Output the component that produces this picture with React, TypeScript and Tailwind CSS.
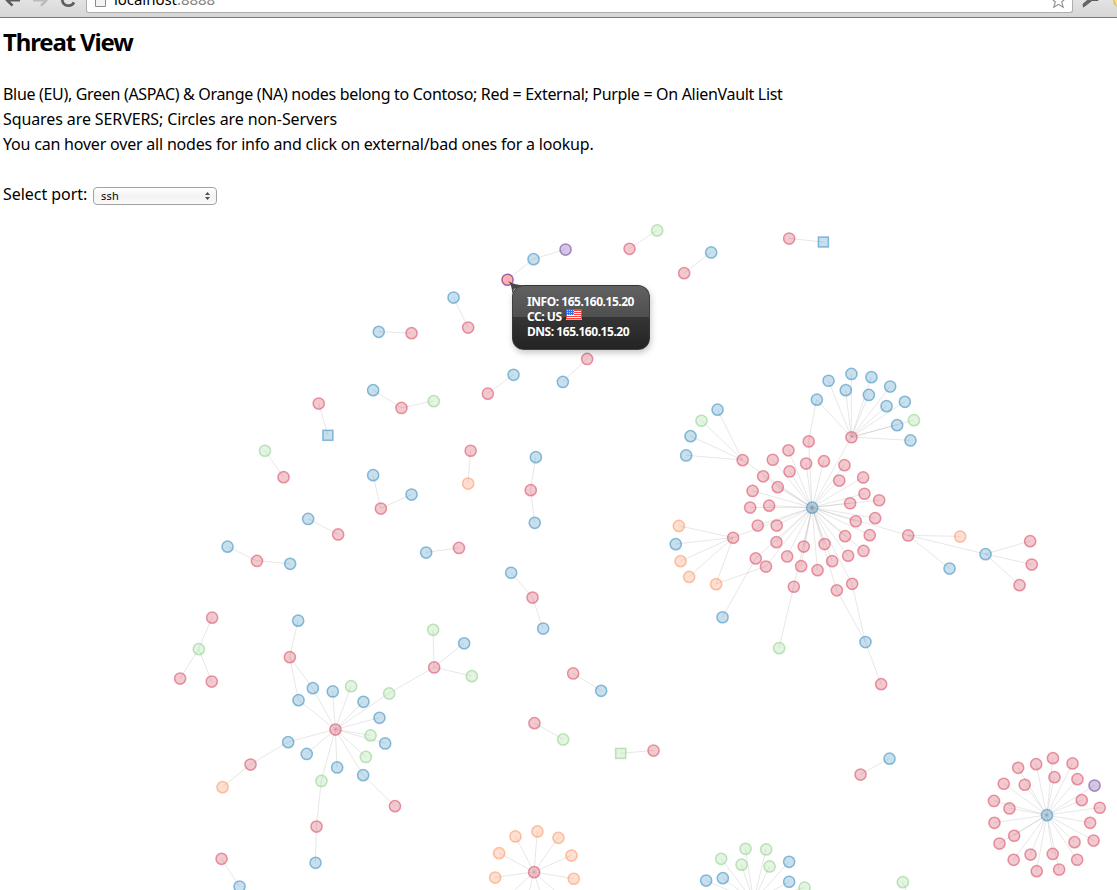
import React from "react";

type Kind = "r" | "b" | "g" | "o" | "p" | "h";
type Node = [number, number, Kind, "square"?];
type Group = { nodes: Node[]; links: [number, number][] };

const PALETTE: Record<Kind, { base: string; fill: number; stroke: number }> = {
  r: { base: "#d53e56", fill: 0.28, stroke: 0.52 },
  b: { base: "#3288bd", fill: 0.27, stroke: 0.55 },
  g: { base: "#9ad694", fill: 0.27, stroke: 0.65 },
  o: { base: "#fc8d59", fill: 0.28, stroke: 0.52 },
  p: { base: "#7047a0", fill: 0.3, stroke: 0.6 },
  h: { base: "#7a3f98", fill: 0.3, stroke: 0.75 },
};

const chain = (...nodes: Node[]): Group => ({
  nodes,
  links: nodes.slice(1).map((_, i) => [i, i + 1] as [number, number]),
});

const star = (...nodes: Node[]): Group => ({
  nodes,
  links: nodes.slice(1).map((_, i) => [0, i + 1] as [number, number]),
});

const hub: Node = [812, 507.5, "b"];
const scanner: Node = [335.3, 729.4, "r"];

const LINKS_ONLY: [number, number, number, number][] = [
  [808.6, 441.3, 816.7, 399.5],
  [755.6, 558.3, 722.4, 617.1],
  [765.8, 566.4, 716, 584],
  [793.7, 586.6, 779, 648],
  [836.7, 590.2, 865.3, 641.9],
  [852, 583.7, 865.3, 641.9],
  [865.3, 641.9, 881, 684],
  [908, 535.3, 960, 536.4],
  [908, 535.3, 949.4, 568.4],
  [908, 535.3, 985.4, 554],
  [985.4, 554, 1030, 541],
  [985.4, 554, 1031.6, 564.4],
  [985.4, 554, 1019.4, 585],
  [742.5, 460, 717.4, 409.5],
  [742.5, 460, 701.3, 420.6],
  [742.5, 460, 690.4, 436],
  [742.5, 460, 686, 455.3],
  [733, 537.6, 678.7, 525.8],
  [733, 537.6, 675.6, 544],
  [733, 537.6, 680.4, 561],
  [733, 537.6, 689, 576.8],
  [733, 537.6, 716, 584],
  [851.3, 437.1, 816.7, 399.5],
  [851.3, 437.1, 828.4, 380.6],
  [851.3, 437.1, 851.3, 373.8],
  [851.3, 437.1, 871.3, 377],
  [851.3, 437.1, 890, 386.4],
  [851.3, 437.1, 845.6, 390],
  [851.3, 437.1, 868.7, 394.8],
  [851.3, 437.1, 886.4, 406],
  [851.3, 437.1, 904.7, 401.7],
  [851.3, 437.1, 897, 425],
  [851.3, 437.1, 913.8, 420],
  [851.3, 437.1, 910.3, 440.3],
  [289.7, 657, 298.4, 700],
  [289.7, 657, 312.7, 688],
  [289.7, 657, 298, 620.5],
  [434, 667.3, 389, 693.3],
  [434, 667.3, 433, 629.7],
  [434, 667.3, 464, 643.2],
  [434, 667.3, 471.7, 676],
  [250.4, 764.4, 288, 742],
  [250.4, 764.4, 222.4, 787],
  [316.4, 826.4, 321.3, 780.8],
  [316.4, 826.4, 315.4, 862.7],
  [394.8, 806, 363, 775],
];

const OUTER: Node[] = [
  [816.7, 399.5, "b"], [722.4, 617.1, "b"], [716, 584, "o"], [779, 648, "g"],
  [865.3, 641.9, "b"], [881, 684, "r"], [960, 536.4, "o"], [949.4, 568.4, "b"],
  [985.4, 554, "b"], [1030, 541, "r"], [1031.6, 564.4, "r"], [1019.4, 585, "r"],
  [717.4, 409.5, "b"], [701.3, 420.6, "g"], [690.4, 436, "b"], [686, 455.3, "b"],
  [678.7, 525.8, "o"], [675.6, 544, "b"], [680.4, 561, "o"], [689, 576.8, "o"],
  [828.4, 380.6, "b"], [851.3, 373.8, "b"], [871.3, 377, "b"], [890, 386.4, "b"],
  [845.6, 390, "b"], [868.7, 394.8, "b"], [886.4, 406, "b"], [904.7, 401.7, "b"],
  [897, 425, "b"], [913.8, 420, "g"], [910.3, 440.3, "b"],
  [289.7, 657, "r"], [298, 620.5, "b"], [434, 667.3, "r"], [433, 629.7, "g"],
  [464, 643.2, "b"], [471.7, 676, "g"], [250.4, 764.4, "r"], [222.4, 787, "o"],
  [316.4, 826.4, "r"], [315.4, 862.7, "b"], [394.8, 806, "r"],
];

const GROUPS: Group[] = [
  chain([507.4, 279.6, "h"], [533.4, 259, "b"], [565.4, 249.4, "p"]),
  chain([629.4, 248.7, "r"], [657, 230.3, "g"]),
  chain([684, 273, "r"], [711, 252.3, "b"]),
  chain([789, 238.4, "r"], [823.4, 242, "b", "square"]),
  chain([560, 314.7, "r"], [592.4, 303.3, "b"]),
  chain([587, 358.8, "r"], [562.7, 381.8, "b"]),
  chain([453.4, 297.4, "b"], [468, 327.4, "r"]),
  chain([378.6, 331.7, "b"], [411.4, 333, "r"]),
  chain([373, 390, "b"], [401.3, 407.8, "r"], [433.6, 401, "g"]),
  chain([487.7, 393.5, "r"], [513.4, 374.7, "b"]),
  chain([318.6, 403.4, "r"], [327.9, 435.3, "b", "square"]),
  chain([264.8, 450.6, "g"], [283.4, 477, "r"]),
  chain([470.5, 450.6, "r"], [468, 483.4, "o"]),
  chain([373, 475, "b"], [380.7, 508.4, "r"], [411.4, 494.4, "b"]),
  chain([308, 518.8, "b"], [338, 534.3, "r"]),
  chain([227.4, 546.5, "b"], [256.8, 560.8, "r"], [290, 563.7, "b"]),
  chain([426, 552.4, "b"], [458.8, 547.8, "r"]),
  chain([535.7, 457, "b"], [530.6, 490, "r"], [534.6, 522.7, "b"]),
  chain([511, 572.6, "b"], [532.4, 597.4, "r"], [543, 628.4, "b"]),
  chain([573, 673.3, "r"], [601, 690.7, "b"]),
  chain([534.3, 723, "r"], [563, 739.3, "g"]),
  chain([620.7, 753.4, "g", "square"], [653.4, 750.4, "r"]),
  chain([860.4, 774.4, "r"], [889.4, 758.5, "b"]),
  chain([221.4, 858.7, "r"], [239.4, 886.4, "b"]),
  chain([902.7, 882, "g"], [912, 905, "r"]),
  star([198.7, 649, "g"], [212, 617.5, "r"], [180, 678.4, "r"], [211.6, 681.4, "r"]),
  star(
    hub,
    [808.6, 441.3, "r"], [788.3, 450.2, "r"], [772.6, 459.6, "r"], [763, 476.2, "r"],
    [777.6, 487, "r"], [752.4, 490.8, "r"], [789.4, 471.3, "r"], [806, 463.4, "r"],
    [823.8, 461, "r"], [844.3, 465, "r"], [839.1, 480.4, "r"], [863, 477.3, "r"],
    [864.3, 493.6, "r"], [850, 503.1, "r"], [879, 500.1, "r"], [875, 518, "r"],
    [855.6, 521.1, "r"], [869.6, 535, "r"], [844.9, 536, "r"], [863.4, 550.8, "r"],
    [848, 555.6, "r"], [832, 561, "r"], [824.4, 543.9, "r"], [817.4, 570, "r"],
    [801, 566, "r"], [803.6, 546.4, "r"], [787, 556.3, "r"], [776.3, 542, "r"],
    [776.6, 525.4, "r"], [757.6, 525.4, "r"], [769, 505.5, "r"], [750, 507.4, "r"],
    [755.6, 558.3, "r"], [765.8, 566.4, "r"], [742.5, 460, "r"], [733, 537.6, "r"],
    [793.7, 586.6, "r"], [836.7, 590.2, "r"], [852, 583.7, "r"], [908, 535.3, "r"],
    [851.3, 437.1, "r"],
  ),
  star(
    scanner,
    [298.4, 700, "b"], [312.7, 688, "b"], [332.6, 691.3, "b"], [351, 686, "g"],
    [363.3, 701.7, "b"], [389, 693.3, "g"], [379.3, 717.7, "b"], [370.4, 735.3, "g"],
    [385, 743.3, "b"], [365.7, 756.8, "g"], [363, 775, "b"], [337, 767.3, "b"],
    [321.3, 780.8, "g"], [306.6, 753.8, "b"], [288, 742, "b"],
  ),
  star(
    [534, 872, "r"],
    [495, 877.4, "o"], [499, 853, "o"], [515.3, 836.3, "o"], [537.3, 831.3, "o"],
    [558.3, 837.7, "o"], [571.3, 855.4, "o"], [573.6, 878.6, "o"],
    [503, 901, "o"], [525, 908, "o"], [545, 909, "o"], [565, 900, "o"],
  ),
  star(
    [753.6, 901.3, "r"],
    [721, 858.7, "g"], [745.4, 848.7, "g"], [766, 849.3, "g"], [741.4, 864.5, "g"],
    [769.4, 866.3, "g"], [789, 861.7, "b"], [789, 881.6, "b"], [804.4, 887.5, "g"],
    [706, 880.4, "b"], [722.7, 878, "b"],
  ),
  star(
    [1046.8, 815, "b"],
    [1052.8, 758, "r"], [1036, 764, "r"], [1072.4, 763.3, "r"], [1018, 767.7, "r"],
    [1054.3, 777, "r"], [1077.3, 779, "r"], [1094.4, 785.4, "p"], [1024.6, 784.6, "r"],
    [1003.6, 783.6, "r"], [993.8, 800.8, "r"], [1009.3, 808.3, "r"], [1081.6, 800, "r"],
    [1099.6, 807.6, "r"], [1090, 822.7, "r"], [1093.4, 840.4, "r"], [1074.4, 842, "r"],
    [1077, 859.6, "r"], [1059, 869.4, "r"], [1052.6, 853.8, "r"], [1036.6, 871, "r"],
    [1030.4, 854.4, "r"], [1013.5, 859.7, "r"], [1014, 835.6, "r"], [999.3, 843.4, "r"],
    [994.3, 822.7, "r"],
  ),
  { nodes: OUTER, links: [] },
];

function Mark({ node: [x, y, kind, shape] }: { node: Node }) {
  const { base, fill, stroke } = PALETTE[kind];
  const paint = {
    fill: kind === "h" ? "#ff6464" : base,
    fillOpacity: kind === "h" ? 0.5 : fill,
    stroke: base,
    strokeOpacity: stroke,
    strokeWidth: 1.5,
  };
  return shape === "square" ? (
    <rect x={x - 5} y={y - 5} width={10} height={10} {...paint} />
  ) : (
    <circle cx={x + 0.15} cy={y + 0.15} r={5.6} {...paint} />
  );
}

function Graph() {
  return (
    <svg className="block h-[683px] w-[1117px] shrink-0" viewBox="0 207 1117 683">
      <g stroke="#999999" strokeOpacity={0.24} strokeWidth={1}>
        {GROUPS.flatMap((g, i) =>
          g.links.map(([a, b], j) => (
            <line key={`${i}-${j}`} x1={g.nodes[a][0]} y1={g.nodes[a][1]} x2={g.nodes[b][0]} y2={g.nodes[b][1]} />
          )),
        )}
        {LINKS_ONLY.map(([x1, y1, x2, y2], i) => (
          <line key={i} x1={x1} y1={y1} x2={x2} y2={y2} />
        ))}
      </g>
      {GROUPS.flatMap((g, i) => g.nodes.map((n, j) => <Mark key={`${i}-${j}`} node={n} />))}
    </svg>
  );
}

function Toolbar() {
  return (
    <div className="relative flex h-[18px] shrink-0 overflow-hidden border-b border-[#7b7b7b] bg-linear-to-b from-[#e3e3e3] to-[#d6d6d6]">
      <svg className="h-[17px] w-[86px] shrink-0" viewBox="0 0 86 17" fill="none" strokeWidth={2.6}>
        <path d="M20 0.2H7M12.5 5.6L6.3 -0.4" stroke="#5c5c5c" />
        <path d="M33 0.2H46M41 5.6L47.2 -0.4" stroke="#bcbcbc" />
        <path d="M62.3 -1.5C61.8 3 64.8 5.7 68.4 5.7C71 5.7 73 4.5 74 2.4" stroke="#5c5c5c" />
      </svg>
      <div className="flex h-[13px] w-[987px] shrink-0 items-end rounded-b-[3px] border-x border-b border-[#adadad] bg-white">
        <svg className="ml-[8px] h-[12px] w-[12px] shrink-0 self-start" viewBox="0 0 12 12">
          <path d="M0.5 -2V6.5H10.5V-2" fill="#f4f4f4" stroke="#8b8b8b" />
        </svg>
        <div className="ml-[7px] flex h-[12px] flex-col justify-end whitespace-pre font-['Noto_Sans',sans-serif] text-[15px] leading-[20px] text-black">
          <span className="mb-[3px] tracking-[-0.05px]">
            localhost<span className="text-[#808080]">:8888</span>
          </span>
        </div>
        <svg className="ml-auto mr-[6px] h-[12px] w-[15px] shrink-0 self-start" viewBox="0 0 15 12" fill="none">
          <path d="M1 -1L4.3 2L2.8 7.2L7.5 4.4L12.2 7.2L10.7 2L14 -1" stroke="#8c8c8c" strokeWidth={1.1} />
        </svg>
      </div>
      <svg className="h-[17px] w-[44px] shrink-0" viewBox="0 0 44 17">
        <path d="M10.5 7L19 0.5H25V-2H17L10 4.2Z" fill="#666" stroke="#5c5c5c" strokeWidth={1} />
        <path d="M41 -1C40.4 3 42 6 46 6.5V-1Z" fill="#f7dc7d" stroke="#e3a93c" strokeWidth={1} />
      </svg>
    </div>
  );
}

function Flag() {
  return (
    <svg className="ml-[2px] h-[11px] w-[16px] shrink-0" viewBox="0 0 16 11">
      <rect width="16" height="11" fill="#f4433c" />
      {[2, 4, 6, 8].map((y) => (
        <rect key={y} x="1" y={y} width="14" height="1" fill="#fff" />
      ))}
      <rect width="8" height="6" fill="#2f6fe8" />
      {[1, 3, 5].map((y) =>
        [1, 3, 5, 7].map((x) => <rect key={`${x}-${y}`} x={x} y={y} width="1" height="1" fill="#b9d2ff" />),
      )}
      <rect x="0" y="10" width="16" height="1" fill="#f9a09a" />
    </svg>
  );
}

function Tooltip() {
  return (
    <div className="absolute left-[512px] top-[285px] h-[65px] w-[138px] rounded-[12px] border border-[#3a3a3a]/80 bg-[linear-gradient(180deg,#5a5a5aF4_0,#444444F0_31px,#2c2c2cF4_31px,#1f1f1fFA_63px)] shadow-[1px_3px_6px_rgba(0,0,0,0.22)]">
      <svg className="absolute -left-[5px] -top-[5px] h-[14px] w-[18px]" viewBox="0 0 18 14">
        <path d="M0 0C3 3 4 7 4.3 13L6 8L17 4.3C10 4.3 5 3 0 0Z" fill="#474747" />
      </svg>
      <div className="pl-[14px] pt-[8px] whitespace-nowrap font-['Noto_Sans',sans-serif] text-[12px] font-bold leading-[15px] tracking-[-0.46px] text-white">
        <div>INFO: 165.160.15.20</div>
        <div className="flex h-[15px]">
          <span className="w-[37px]">CC: US</span>
          <Flag />
        </div>
        <div>DNS: 165.160.15.20</div>
      </div>
    </div>
  );
}

export default function App() {
  return (
    <div className="relative flex h-[890px] w-[1117px] flex-col overflow-hidden bg-white font-['Noto_Sans',sans-serif] text-black">
      <Toolbar />
      <h1 className="h-[50px] shrink-0 whitespace-nowrap pl-[3px] text-[24px] font-bold leading-[48px] tracking-[-1.15px]">
        Threat View
      </h1>
      <div className="mt-[14px] shrink-0 whitespace-nowrap pl-[3px] text-[16px] leading-[25px]">
        <p className="tracking-[-0.315px]">Blue (EU), Green (ASPAC) &amp; Orange (NA) nodes belong to Contoso; Red = External; Purple = On AlienVault List</p>
        <p className="tracking-[-0.1px]">Squares are SERVERS; Circles are non-Servers</p>
        <p className="tracking-[-0.2px]">You can hover over all nodes for info and click on external/bad ones for a lookup.</p>
      </div>
      <div className="mt-[25px] flex h-[25px] shrink-0 items-center pl-[3px] text-[16px] leading-[25px]">
        <span className="w-[90px] whitespace-nowrap tracking-[-0.05px]">Select port:</span>
        <button className="mt-[3px] flex h-[18px] w-[124px] items-center justify-between rounded-[4px] border border-[#a3a3a3] bg-linear-to-b from-white via-[#f2f2f2] to-[#fafafa] pl-[7px] pr-[5px] text-[11px] leading-[16px] tracking-[0.2px]">
          <span>ssh</span>
          <svg className="h-[8px] w-[7px]" viewBox="0 0 7 8">
            <path d="M3.5 0L6 3H1ZM3.5 8L1 5H6Z" fill="#505050" />
          </svg>
        </button>
      </div>
      <Graph />
      <Tooltip />
    </div>
  );
}
